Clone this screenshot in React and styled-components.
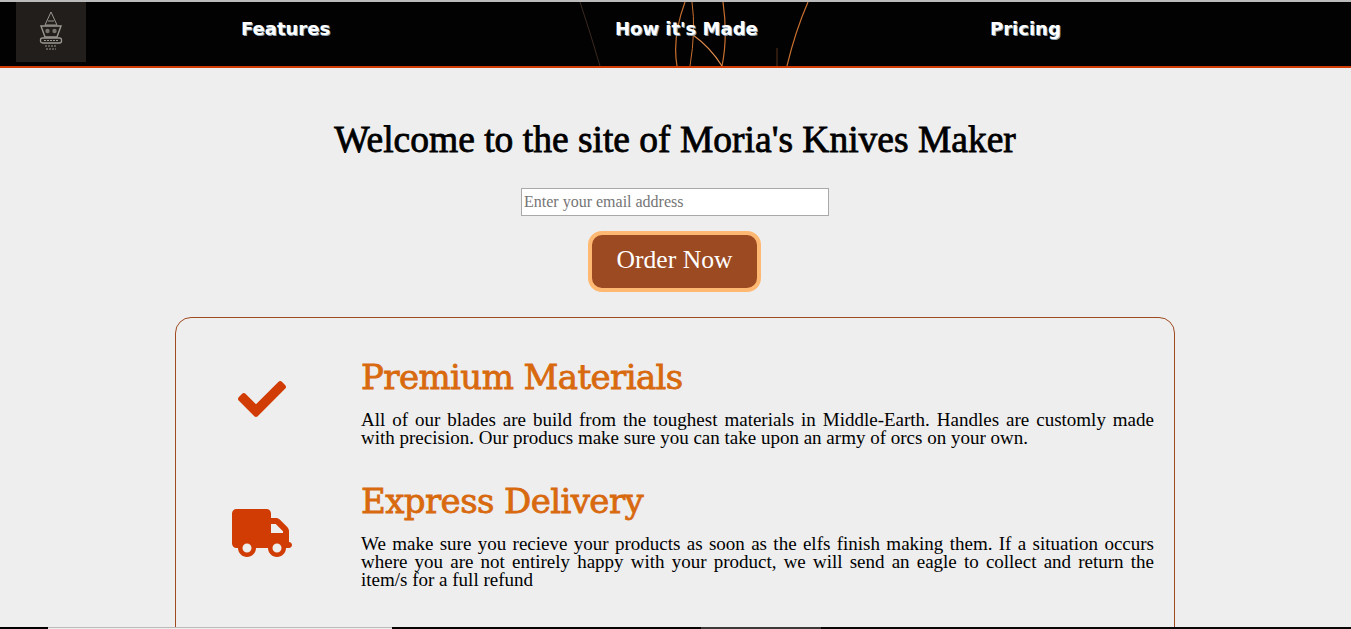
import React from "react";
import styled, { createGlobalStyle } from "styled-components";
import { FaCheck } from "react-icons/fa";
import { FaTruck } from "react-icons/fa6";

const GlobalStyle = createGlobalStyle`
  html, body {
    margin: 0;
    height: 100%;
    overflow: hidden;
    background: #eee;
  }
`;

const Page = styled.div`
  height: 100vh;
  overflow: hidden;
  position: relative;
  border-top: 2px solid #bbb;
  box-sizing: border-box;
`;

const Header = styled.header`
  position: relative;
  height: 64px;
  background: #030202;
  border-bottom: 2px solid #d03c04;
  display: flex;
  align-items: flex-start;
  padding-left: 16px;
`;

const Sparks = styled.svg`
  position: absolute;
  inset: 0;
  width: 100%;
  height: 100%;
`;

const LogoBox = styled.div`
  position: relative;
  width: 70px;
  height: 60px;
  background: #211e1c;
  display: flex;
  align-items: center;
  justify-content: center;
`;

const NavLink = styled.a`
  position: relative;
  font-family: "DejaVu Sans", sans-serif;
  font-weight: 700;
  font-size: 18px;
  line-height: 54px;
  color: #fff;
  text-shadow: 1px 1px 0 #8fa3b5;
  width: ${(p) => p.$width}px;
  margin-left: ${(p) => p.$offset}px;
  white-space: nowrap;
`;

const Main = styled.main`
  display: flex;
  flex-direction: column;
  align-items: center;
  padding-right: 1px;
`;

const Title = styled.h1`
  font-family: "Liberation Serif", serif;
  font-weight: 400;
  font-size: 37.5px;
  line-height: 40px;
  margin: 52px 0 0;
  color: #000;
  -webkit-text-stroke: 0.8px #000;
  white-space: nowrap;
`;

const EmailInput = styled.input`
  box-sizing: border-box;
  width: 308px;
  height: 28px;
  margin-top: 28px;
  padding: 1px 2px;
  border: 1px solid #a9a9a9;
  background: #fff;
  font-family: "Liberation Serif", serif;
  font-size: 16px;
  &::placeholder {
    color: #757575;
  }
`;

const OrderButton = styled.button`
  box-sizing: border-box;
  width: 173px;
  height: 61px;
  margin: 15px 1px 0 0;
  border: 4px solid #ffb871;
  border-radius: 14px;
  background: #9c4a22;
  color: #fff;
  font-family: "Liberation Serif", serif;
  font-size: 25.6px;
  padding-bottom: 4px;
`;

const Card = styled.section`
  box-sizing: border-box;
  width: 1000px;
  height: 400px;
  margin-top: 25px;
  border: 1px solid #a04a20;
  border-radius: 16px;
  padding: 39px 20px 0 0;
  display: flex;
  flex-direction: column;
  gap: 27px;
`;

const Feature = styled.article`
  display: flex;
  min-height: ${(p) => p.$height}px;
`;

const IconCell = styled.div`
  width: 185px;
  flex: none;
  display: flex;
  justify-content: center;
  padding-top: ${(p) => p.$top}px;
  padding-right: 13px;
  box-sizing: border-box;
  color: #d03c04;
  font-size: ${(p) => p.$size}px;
  svg {
    display: block;
  }
`;

const FeatureBody = styled.div`
  flex: 1;
`;

const FeatureTitle = styled.h2`
  margin: 0;
  font-family: "DejaVu Serif", serif;
  font-weight: 400;
  font-size: 34px;
  line-height: 40px;
  color: #d8690e;
  -webkit-text-stroke: 0.8px #d8690e;
  letter-spacing: -0.6px;
  white-space: nowrap;
`;

const FeatureText = styled.p`
  margin: 14px 0 0;
  font-family: "Liberation Serif", serif;
  font-size: 19px;
  line-height: 18px;
  text-align: justify;
  color: #000;
`;

const BottomStrip = styled.div`
  position: fixed;
  left: 0;
  right: 0;
  bottom: 0;
  height: 2px;
  background:
    linear-gradient(#bbb, #bbb) 48px 0 / 344px 1px no-repeat,
    linear-gradient(
      to right,
      #000 48px,
      #eee 48px,
      #eee 392px,
      #060504 392px,
      #060504 701px,
      #3c3a38 701px,
      #3c3a38 821px,
      #0a0806 821px
    );
`;

function Logo() {
  return (
    <svg width="26" height="42" viewBox="0 0 26 42" fill="none" stroke="#9c9790">
      <path d="M13 1 L19 14 H7 Z" strokeWidth="1" />
      <path d="M10 10 H16" strokeWidth="1" />
      <path d="M3 15 H23 L19 26 H7 Z" strokeWidth="1.4" />
      <circle cx="9.5" cy="20" r="2.2" fill="#77736d" stroke="none" />
      <circle cx="16.5" cy="20" r="2.2" fill="#77736d" stroke="none" />
      <rect x="2.5" y="27" width="21" height="5" rx="2" strokeWidth="1.3" />
      <path d="M6 29.5 H20" strokeWidth="1.2" strokeDasharray="2 1" />
      <path d="M7 35 H19 M8 38 H18" strokeWidth="1.2" strokeDasharray="2 1" />
    </svg>
  );
}

function App() {
  return (
    <Page>
      <GlobalStyle />
      <Header>
        <Sparks viewBox="0 0 1351 64" preserveAspectRatio="none" fill="none" stroke="#c8702f">
          <path d="M580 0 Q590 30 600 64" strokeWidth="1" stroke="#3a2a20" />
          <path d="M685 0 Q672 35 677 64" strokeWidth="1.2" />
          <path d="M692 0 Q696 28 690 64" strokeWidth="1" />
          <path d="M723 0 Q728 35 722 64" strokeWidth="1.2" />
          <path d="M693 33 Q710 45 722 64" strokeWidth="1.2" stroke="#e08a4c" />
          <path d="M787 64 Q795 30 808 0" strokeWidth="1.2" />
          <path d="M777 46 V64" strokeWidth="1" stroke="#5a3018" />
        </Sparks>
        <LogoBox>
          <Logo />
        </LogoBox>
        <NavLink $width={100} $offset={155}>Features</NavLink>
        <NavLink $width={150} $offset={274}>How it's Made</NavLink>
        <NavLink $width={80} $offset={225}>Pricing</NavLink>
      </Header>
      <Main>
        <Title>Welcome to the site of Moria's Knives Maker</Title>
        <EmailInput type="email" placeholder="Enter your email address" />
        <OrderButton>Order Now</OrderButton>
        <Card>
          <Feature $height={97}>
            <IconCell $top={18} $size={48}>
              <FaCheck />
            </IconCell>
            <FeatureBody>
              <FeatureTitle>Premium Materials</FeatureTitle>
              <FeatureText>
                All of our blades are build from the toughest materials in Middle-Earth. Handles are customly made with precision. Our producs make sure you can take upon an army of orcs on your own.
              </FeatureText>
            </FeatureBody>
          </Feature>
          <Feature $height={110}>
            <IconCell $top={22} $size={60}>
              <FaTruck />
            </IconCell>
            <FeatureBody>
              <FeatureTitle>Express Delivery</FeatureTitle>
              <FeatureText>
                We make sure you recieve your products as soon as the elfs finish making them. If a situation occurs where you are not entirely happy with your product, we will send an eagle to collect and return the item/s for a full refund
              </FeatureText>
            </FeatureBody>
          </Feature>
        </Card>
      </Main>
      <BottomStrip />
    </Page>
  );
}

export default App;
